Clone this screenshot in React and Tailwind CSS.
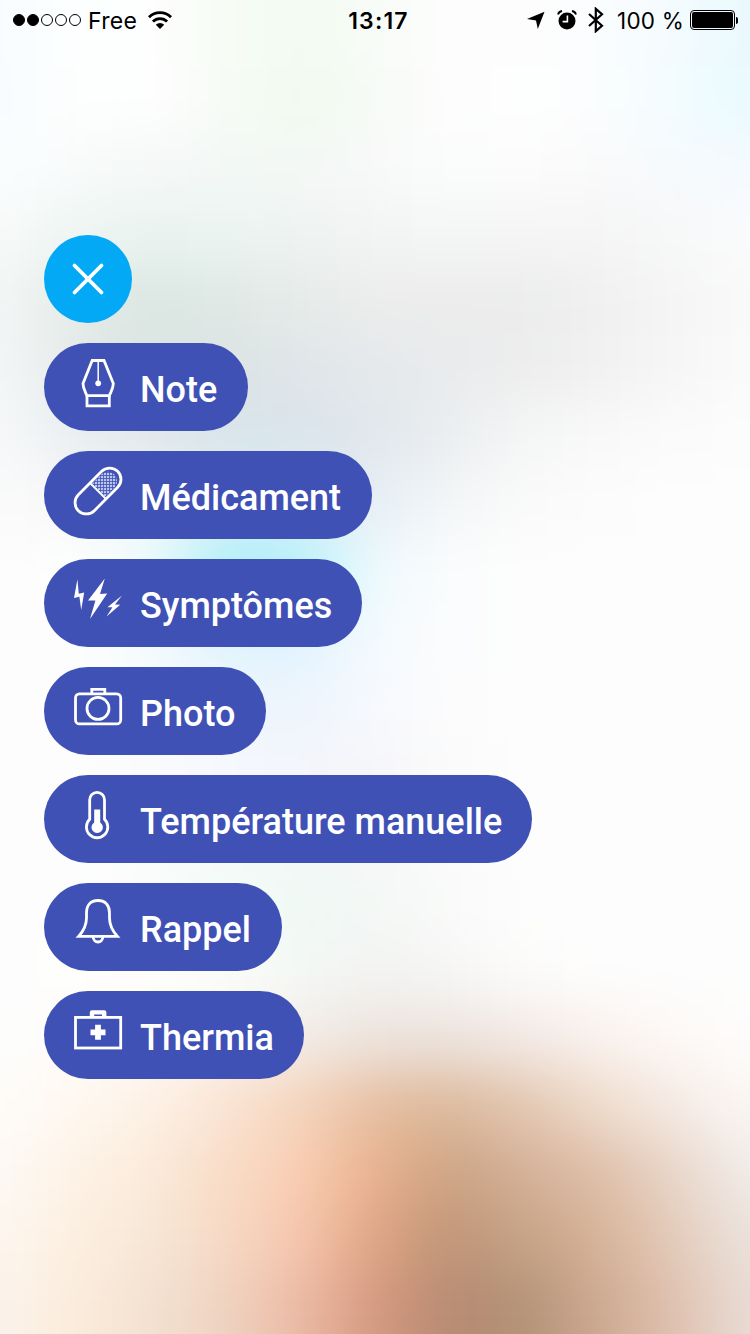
import { X } from 'lucide-react';

// Colours of the blurred backdrop, one row per 67px, one stop per 75px
const backdrop = [
  ['f8fcff', 'fdffff', 'fefefe', 'f7fcf5', 'f2fbf1', 'f8fcf7', 'fdfdfd', 'fdfdfd', 'fbfdfe', 'f4fbfe', 'e9f9fe'],
  ['f8fcff', 'fdfefe', 'fefefe', 'f7fbf6', 'effaef', 'f7faf6', 'fdfdfd', 'fefefe', 'fbfdfe', 'f2fcff', 'e8faff'],
  ['fbfeff', 'f9fbfb', 'f6f8f8', 'f3f8f5', 'f4f8f5', 'f8f9f9', 'fbfcfc', 'fcfcfc', 'fafafb', 'f6fafd', 'f5faff'],
  ['f8faf9', 'edf5f2', 'e9f3f0', 'eaf4f1', 'eff3f2', 'f3f4f4', 'f4f5f5', 'f5f5f5', 'f5f5f5', 'f7f8f8', 'fbfbfd'],
  ['f3f6f5', 'e3ebe8', 'dae6e1', 'dfe8e5', 'e6ebe9', 'ececec', 'ececec', 'ebecec', 'f0f0f0', 'f5f5f5', 'fafafa'],
  ['f4f6f7', 'e6eaea', 'dbe4e2', 'dbe4e4', 'e0e5e9', 'e5e9ec', 'e9ebed', 'ededed', 'f1f1f1', 'f6f6f6', 'fbfbfb'],
  ['f7f9fb', 'eaeef0', 'e1e8ec', 'd8e5ec', 'dae4ec', 'e1e7ec', 'ebeef0', 'f5f6f6', 'f9f9f9', 'fbfbfb', 'fcfcfc'],
  ['fbfbfb', 'f7f7f8', 'f2f5f7', 'dfeef4', 'ddecf5', 'e6eff6', 'f4f6f7', 'fafafa', 'fcfcfc', 'fdfdfd', 'fdfdfd'],
  ['fdfdfd', 'fefefe', 'eefcfd', 'a8effa', 'b2f1fb', 'f0fafd', 'fbfcfd', 'fdfdfd', 'fdfdfd', 'fdfdfd', 'fdfdfd'],
  ['fdfdfd', 'fdfdfd', 'f5fbfd', 'def3fd', 'dff3fe', 'f5fafe', 'fbfcfd', 'fdfdfd', 'fdfdfd', 'fdfdfd', 'fdfdfd'],
  ['fdfdfd', 'fdfdfd', 'f8fafe', 'eef6fe', 'edf4fd', 'f7f9fd', 'fcfcfd', 'fdfdfd', 'fdfdfd', 'fdfdfd', 'fdfdfd'],
  ['fdfdfd', 'fdfdfd', 'fafbfd', 'f6f8fd', 'f3f5fb', 'f6f6f9', 'fbfbfb', 'fdfdfd', 'fdfdfd', 'fdfdfd', 'fdfdfd'],
  ['fdfdfd', 'fdfdfd', 'fafcfc', 'f5faf9', 'f3f7f8', 'f5f6f7', 'fbfbfb', 'fdfdfd', 'fdfdfd', 'fdfdfd', 'fdfdfd'],
  ['fdfdfd', 'fdfdfd', 'fafcfa', 'f3fbf6', 'eff9f4', 'f4f8f5', 'f9faf9', 'fdfdfd', 'fdfdfd', 'fdfdfd', 'fdfdfd'],
  ['fdfdfd', 'fefefd', 'fefefc', 'fafdfa', 'f4f8f6', 'f2f3f2', 'f6f6f5', 'fcfcfb', 'fdfdfd', 'fdfdfd', 'fdfdfd'],
  ['fdfdfd', 'fefcfa', 'fdf9f5', 'fbf3ec', 'f3ece7', 'ece3dc', 'ece3dd', 'f3e9e5', 'faf2ee', 'fdf9f6', 'fefdfc'],
  ['fefcf9', 'fff8f0', 'fdf1e6', 'fae4d4', 'f5d5bd', 'e6bea1', 'dcb99b', 'e3c7b1', 'efdccd', 'f5eae4', 'fbf7f4'],
  ['fdf9f5', 'fef2e6', 'fbebdb', 'f8dcc7', 'faceb3', 'eab18e', 'cba383', 'd5b098', 'dfbfa9', 'e8d6c9', 'f2edea'],
  ['fdf6ef', 'fdefe0', 'f6e7d7', 'f6d9c5', 'f7c6ae', 'dfa484', 'bf9477', 'c5a386', 'd7b397', 'e4cbbb', 'ebe3dd'],
  ['faf3ec', 'fcecdb', 'f3e1d1', 'efd3c2', 'ecbaa4', 'd59980', 'b68a72', 'b29277', 'cea991', 'e0c1af', 'e9ddd7'],
];

const rowGradient = (row) =>
  `linear-gradient(to right, ${row.map((c, i) => `#${c} ${75 + i * 75}px`).join(', ')})`;

const Backdrop = () => {
  const rows = [backdrop[0], ...backdrop, backdrop[backdrop.length - 1]];
  return (
    <div className="absolute inset-0 overflow-hidden">
      <div className="absolute -top-[67px] -left-[75px] w-[900px] flex flex-col blur-[26px]">
        {rows.map((row, index) => (
          <div key={index} className="h-[67px]" style={{ background: rowGradient(row) }} />
        ))}
      </div>
    </div>
  );
};

const Icon = ({ children }) => (
  <svg
    viewBox="0 0 48 48"
    className="mt-4 size-12 shrink-0 self-start overflow-visible"
    fill="none"
    stroke="white"
    strokeWidth="2.8"
  >
    {children}
  </svg>
);

const PenIcon = () => (
  <Icon>
    <path d="M18.2 1.5H30L39.3 24.5C39.3 29.5 37 32.5 35.3 36.7H12.9C11.2 32.5 9 29.5 9 24.5Z" />
    <path d="M13 36.7V46.8H35.3V36.7" />
    <path d="M24.2 1.5V22" strokeWidth="1.5" />
    <circle cx="24.2" cy="24.3" r="2.9" fill="white" stroke="none" />
  </Icon>
);

const PillIcon = () => (
  <Icon>
    <defs>
      <pattern id="grain" width="3" height="3" patternUnits="userSpaceOnUse">
        <rect width="2.2" height="2.2" fill="#bcc4ee" stroke="none" />
      </pattern>
    </defs>
    <path d="M17.5 17.5L27.7 7.3A9.2 9.2 0 0 1 40.7 20.3L30.5 30.5Z" fill="url(#grain)" stroke="none" />
    <rect x="-27.8" y="-11.3" width="55.6" height="22.6" rx="11.3" transform="translate(24 24) rotate(-45)" />
    <path d="M16 16L32 32" strokeWidth="1.8" />
  </Icon>
);

const BoltsIcon = () => (
  <Icon>
    <g fill="white" stroke="none">
      <path d="M3.4 4.3L0 22.9L5.4 21.8L7.2 35L10.2 17.6L4.8 18.7Z" />
      <path d="M30.8 3.6L14 25.6L21.4 25.4L16 44L33.2 18.6L26 19Z" />
      <path d="M48 20.6L33.4 32.2L38.4 32.2L32.6 41.6L46.2 29.8L41 29.6Z" />
    </g>
  </Icon>
);

const CameraIcon = () => (
  <Icon>
    <rect x="1.5" y="10.9" width="45.2" height="30" rx="4" />
    <path d="M17.8 10.9V6.4H30.8V10.9" />
    <circle cx="24" cy="25.4" r="11" />
  </Icon>
);

const ThermometerIcon = () => (
  <Icon>
    <path d="M15.7 28.3V8.7a7.4 7.4 0 0 1 14.8 0V28.3A10.7 10.7 0 1 1 15.7 28.3Z" />
    <path d="M20.2 18.6H26.2V31.5A5.7 5.7 0 1 1 20.2 31.5Z" fill="white" stroke="none" />
  </Icon>
);

const BellIcon = () => (
  <Icon>
    <path d="M24 1.5C16 1.5 12.5 7 12.5 14V19C12.5 27 9 32.5 4.6 37.4H43.4C39 32.5 35.5 27 35.5 19V14C35.5 7 32 1.5 24 1.5Z" />
    <path d="M19.2 38a4.8 5 0 0 0 9.6 0" />
  </Icon>
);

const KitIcon = () => (
  <Icon>
    <rect x="1.5" y="10.4" width="45.2" height="30.6" />
    <path d="M18 9.4V5.4H30.2V9.4" strokeWidth="4.4" strokeLinejoin="round" />
    <path d="M24 17.8V32.8M16.5 25.3H31.5" strokeWidth="5.8" />
  </Icon>
);

const actions = [
  { label: 'Note', icon: PenIcon, width: 'w-[204px]' },
  { label: 'Médicament', icon: PillIcon, width: 'w-[328px]' },
  { label: 'Symptômes', icon: BoltsIcon, width: 'w-[318px]' },
  { label: 'Photo', icon: CameraIcon, width: 'w-[222px]' },
  { label: 'Température manuelle', icon: ThermometerIcon, width: 'w-[488px]' },
  { label: 'Rappel', icon: BellIcon, width: 'w-[238px]' },
  { label: 'Thermia', icon: KitIcon, width: 'w-[260px]' },
];

const StatusBar = () => (
  <header className="relative grid h-10 grid-cols-[1fr_auto_1fr] items-center pl-[13px] pr-[12px] font-['Inter',sans-serif] text-[22px] text-black">
    <div className="flex items-center">
      <div className="flex gap-[2px]">
        {[true, true, false, false, false].map((filled, index) => (
          <span
            key={index}
            className={`size-3 rounded-full border border-black ${filled ? 'bg-black' : ''}`}
          />
        ))}
      </div>
      <span className="ml-[7px] pt-[2px] text-[23px] tracking-[0.3px]">Free</span>
      <svg viewBox="0 0 26 20" className="ml-[10px] h-5 w-[26px]" fill="none" stroke="black" strokeWidth="2.8">
        <path d="M2 7.2A15.5 15.5 0 0 1 24 7.2" />
        <path d="M5.9 11.6A10 10 0 0 1 20.1 11.6" />
        <path d="M13 19L8.8 14.8A6 6 0 0 1 17.2 14.8Z" fill="black" stroke="none" />
      </svg>
    </div>
    <span className="pt-[2px] pl-[6px] text-[23px] font-semibold tracking-[1.2px]">13:17</span>
    <div className="flex items-center justify-end">
      <svg viewBox="0 0 18 18" className="size-[18px]">
        <path d="M17.5 0.8L10.8 18L9 9.4L0 8Z" />
      </svg>
      <svg viewBox="0 0 20 20" className="ml-[12px] size-5">
        <circle cx="10" cy="11" r="8.5" />
        <path d="M1 4.6A5 5 0 0 1 5 1M19 4.6A5 5 0 0 0 15 1" fill="none" stroke="black" strokeWidth="1.8" />
        <path d="M10.4 5.5V11.6H5.6" fill="none" stroke="white" strokeWidth="1.6" />
      </svg>
      <svg viewBox="0 0 16 26" className="ml-[11px] h-[26px] w-4" fill="none" stroke="black" strokeWidth="2.2">
        <path d="M1 7L14 18.8L7.8 24.2V1.8L14 7.2L1 19" />
      </svg>
      <span className="ml-[13px] pt-[2px] text-[22.5px] tracking-[0.2px] whitespace-nowrap">100 %</span>
      <div className="ml-[6px] h-5 w-[45px] rounded-[4px] border border-black p-[1px]">
        <div className="h-full rounded-[2px] bg-black" />
      </div>
      <div className="ml-[1px] h-[7px] w-[2px] rounded-r-full bg-black" />
    </div>
  </header>
);

const App = () => {
  return (
    <div className="relative h-[1334px] w-[750px] overflow-hidden bg-[#fdfdfd]">
      <Backdrop />
      <StatusBar />
      <main className="relative flex flex-col items-start gap-5 pt-[195px] pl-11 font-['Roboto',sans-serif]">
        <button className="flex size-[88px] items-center justify-center rounded-full bg-[#03a9f4]">
          <X size={54} color="white" strokeWidth={1.7} />
        </button>
        {actions.map(({ label, icon: ActionIcon, width }) => (
          <button
            key={label}
            className={`flex h-[88px] items-center gap-[18px] rounded-full bg-[#3f51b5] pl-[30px] ${width}`}
          >
            <ActionIcon />
            <span className="pt-[5px] text-4xl font-medium whitespace-nowrap text-white">{label}</span>
          </button>
        ))}
      </main>
    </div>
  );
};

export default App;
